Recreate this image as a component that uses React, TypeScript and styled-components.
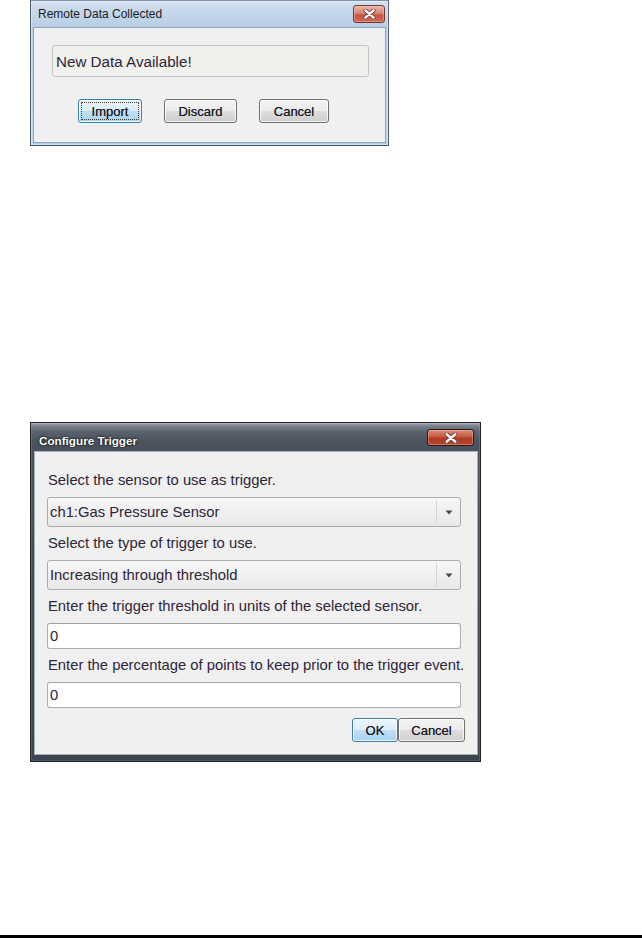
import React from "react";
import styled, { createGlobalStyle, css } from "styled-components";

const Global = createGlobalStyle`
  html, body { margin: 0; padding: 0; background: #ffffff; }
  body { font-family: "Liberation Sans", Arial, sans-serif; }
`;

const Page = styled.div`
  width: 642px;
  height: 938px;
  display: flex;
  flex-direction: column;
  overflow: hidden;
  background: #ffffff;
`;

const Stack = styled.div`
  padding-left: 30px;
  display: flex;
  flex-direction: column;
  align-items: flex-start;
`;

const BottomRule = styled.div`
  margin-top: auto;
  height: 3px;
  background: #000000;
`;

/* ---------- window frames ---------- */

const LightWindow = styled.div`
  width: 359px;
  height: 146px;
  box-sizing: border-box;
  border: 1px solid #4f5f73;
  border-top-color: #7d91a8;
  border-bottom-color: #3f5064;
  background: linear-gradient(#d3e0ef 0px, #c2d5ea 14px, #b9cde4 26px, #c4d6ea 100%);
  padding: 0 2px 2px 2px;
  display: flex;
  flex-direction: column;
  box-shadow: inset 0 0 0 1px rgba(255, 255, 255, 0.45), inset 0 -1px 0 1px rgba(120, 200, 230, 0.35);
`;

const DarkWindow = styled.div`
  margin-top: 276px;
  width: 451px;
  height: 340px;
  box-sizing: border-box;
  border: 1px solid #1d232c;
  background: linear-gradient(
    #a6abb2 0px,
    #7a818b 3px,
    #59616d 9px,
    #4a525e 20px,
    #434b57 60%,
    #3d4551 100%
  );
  padding: 0 2px 6px 3px;
  display: flex;
  flex-direction: column;
  box-shadow: inset 0 0 0 1px rgba(255, 255, 255, 0.12);
`;

const TitleBar = styled.div<{ $h: number; $textTop: number; $btnTop: number; $btnRight: number }>`
  height: ${(p) => p.$h}px;
  flex: none;
  display: flex;
  align-items: flex-start;
  justify-content: space-between;
  padding-left: 5px;
  padding-right: ${(p) => p.$btnRight}px;
  & > span {
    padding-top: ${(p) => p.$textTop}px;
  }
  & > button {
    margin-top: ${(p) => p.$btnTop}px;
  }
`;

const TitleText = styled.span<{ $dark?: boolean }>`
  font-size: ${(p) => (p.$dark ? "11.7px" : "12px")};
  line-height: 15px;
  color: ${(p) => (p.$dark ? "#ffffff" : "#1b1b22")};
  ${(p) =>
    p.$dark &&
    css`
      font-weight: bold;
      text-shadow: 0 0 3px rgba(0, 0, 0, 0.9), 0 0 1px #000;
    `}
`;

const CloseBtn = styled.button<{ $w: number; $h: number; $dark?: boolean }>`
  width: ${(p) => p.$w}px;
  height: ${(p) => p.$h}px;
  padding: 0;
  box-sizing: border-box;
  border-radius: 3px;
  border: 1px solid ${(p) => (p.$dark ? "#241a18" : "#6d3a35")};
  background: ${(p) =>
    p.$dark
      ? "linear-gradient(#dc8b78 0%, #c65a44 45%, #b03a24 55%, #b5452e 100%)"
      : "linear-gradient(#e9b4a8 0%, #d98878 45%, #c8553f 55%, #cf6a52 100%)"};
  box-shadow: inset 0 0 0 1px rgba(255, 220, 210, 0.35);
  display: flex;
  align-items: center;
  justify-content: center;
`;

const LightClient = styled.div`
  flex: 1;
  background: #f0f0f0;
  border: 1px solid #8fa4bb;
  display: flex;
  flex-direction: column;
  align-items: flex-start;
`;

const DarkClient = styled.div`
  flex: 1;
  background: #f0f0f0;
  border: 1px solid #a9afb7;
  box-sizing: border-box;
  padding: 12px 12px 0 12px;
  display: flex;
  flex-direction: column;
`;

/* ---------- Remote data dialog parts ---------- */

const MessageBox = styled.div`
  margin: 17px 0 0 18px;
  width: 317px;
  height: 32px;
  box-sizing: border-box;
  border: 1px solid #c3c3c3;
  border-radius: 3px;
  background: #f0f0ec;
  padding-left: 3px;
  display: flex;
  align-items: center;
  font-size: 15.2px;
  color: #2e2538;
`;

const ButtonRow = styled.div`
  margin: 22px 0 0 44px;
  display: flex;
  gap: 22px;
`;

const WinButton = styled.button<{ $w: number; $variant?: "default" | "normal" }>`
  width: ${(p) => p.$w}px;
  height: 24px;
  box-sizing: border-box;
  padding: 0;
  border-radius: 3px;
  font-family: "Liberation Sans", Arial, sans-serif;
  font-size: 13px;
  color: #1d1a26;
  text-shadow: 0 0 0.4px rgba(29, 26, 38, 0.8);
  display: flex;
  align-items: center;
  justify-content: center;
  border: 1px solid ${(p) => (p.$variant === "default" ? "#3c7fb1" : "#707070")};
  background: ${(p) =>
    p.$variant === "default"
      ? "linear-gradient(#ecf6fc 0%, #dcecf8 48%, #c0dff3 52%, #a9d3ef 100%)"
      : "linear-gradient(#f3f3f3 0%, #ebebeb 48%, #dddddd 52%, #cfcfcf 100%)"};
  box-shadow: inset 0 0 0 1px rgba(255, 255, 255, 0.75);
`;

const FocusRing = styled.span`
  position: absolute;
  inset: 2px;
  border: 1px dotted #3a3a3a;
  border-radius: 1px;
  pointer-events: none;
`;

const FocusHolder = styled.span`
  position: relative;
  display: flex;
  width: 100%;
  height: 100%;
  align-items: center;
  justify-content: center;
`;

/* ---------- Configure trigger parts ---------- */

const Field = styled.div`
  width: 414px;
  display: flex;
  flex-direction: column;
`;

const Label = styled.div`
  height: 33px;
  line-height: 33px;
  padding-left: 1px;
  font-size: 14.8px;
  color: #2e2538;
  white-space: nowrap;
`;

const Select = styled.div`
  height: 30px;
  box-sizing: border-box;
  border: 1px solid #acacac;
  border-radius: 3px;
  background: linear-gradient(#f7f7f7 0%, #f0f0f0 50%, #e8e8e8 100%);
  display: flex;
  align-items: stretch;
`;

const SelectValue = styled.div`
  flex: 1;
  padding-left: 2px;
  display: flex;
  align-items: center;
  font-size: 14.8px;
  color: #2e2538;
`;

const SelectArrow = styled.div`
  width: 23px;
  border-left: 1px solid #d6d6d6;
  display: flex;
  align-items: center;
  justify-content: center;
  margin: 2px 0;
`;

const TextInput = styled.div`
  height: 26px;
  box-sizing: border-box;
  border: 1px solid #abadb3;
  border-top-color: #9ea1a8;
  border-radius: 3px;
  background: #ffffff;
  padding-left: 2px;
  display: flex;
  align-items: center;
  font-size: 14.8px;
  color: #2e2538;
`;

const Actions = styled.div`
  margin-top: 10px;
  display: flex;
  justify-content: flex-end;
`;

const XIcon = ({ w, h }: { w: number; h: number }) => (
  <svg width={w} height={h} viewBox="0 0 12 9">
    <path d="M2.2 1.2 L9.8 7.8 M9.8 1.2 L2.2 7.8" stroke="#6a3a34" strokeWidth="3.6" strokeLinecap="round" />
    <path d="M2.2 1.2 L9.8 7.8 M9.8 1.2 L2.2 7.8" stroke="#ffffff" strokeWidth="2.2" strokeLinecap="round" />
  </svg>
);

const DownTriangle = () => (
  <svg width="8" height="5" viewBox="0 0 8 5">
    <path d="M0.5 0.5 H7.5 L4 4.5 Z" fill="#4a4a4a" />
  </svg>
);

export default function App() {
  return (
    <Page>
      <Global />
      <Stack>
        <LightWindow>
          <TitleBar $h={26} $textTop={6} $btnTop={4} $btnRight={1}>
            <TitleText>Remote Data Collected</TitleText>
            <CloseBtn $w={32} $h={18} aria-label="Close">
              <XIcon w={13} h={10} />
            </CloseBtn>
          </TitleBar>
          <LightClient>
            <MessageBox>New Data Available!</MessageBox>
            <ButtonRow>
              <WinButton $w={64} $variant="default">
                <FocusHolder>
                  Import
                  <FocusRing />
                </FocusHolder>
              </WinButton>
              <WinButton $w={73}>Discard</WinButton>
              <WinButton $w={70}>Cancel</WinButton>
            </ButtonRow>
          </LightClient>
        </LightWindow>

        <DarkWindow>
          <TitleBar $h={28} $textTop={10} $btnTop={6} $btnRight={4}>
            <TitleText $dark>Configure Trigger</TitleText>
            <CloseBtn $w={47} $h={17} $dark aria-label="Close">
              <XIcon w={14} h={10} />
            </CloseBtn>
          </TitleBar>
          <DarkClient>
            <Field>
              <Label>Select the sensor to use as trigger.</Label>
              <Select>
                <SelectValue>ch1:Gas Pressure Sensor</SelectValue>
                <SelectArrow>
                  <DownTriangle />
                </SelectArrow>
              </Select>
              <Label>Select the type of trigger to use.</Label>
              <Select>
                <SelectValue>Increasing through threshold</SelectValue>
                <SelectArrow>
                  <DownTriangle />
                </SelectArrow>
              </Select>
              <Label>Enter the trigger threshold in units of the selected sensor.</Label>
              <TextInput>0</TextInput>
              <Label>Enter the percentage of points to keep prior to the trigger event.</Label>
              <TextInput>0</TextInput>
            </Field>
            <Actions>
              <WinButton $w={46} $variant="default">OK</WinButton>
              <WinButton $w={67}>Cancel</WinButton>
            </Actions>
          </DarkClient>
        </DarkWindow>
      </Stack>
      <BottomRule />
    </Page>
  );
}
